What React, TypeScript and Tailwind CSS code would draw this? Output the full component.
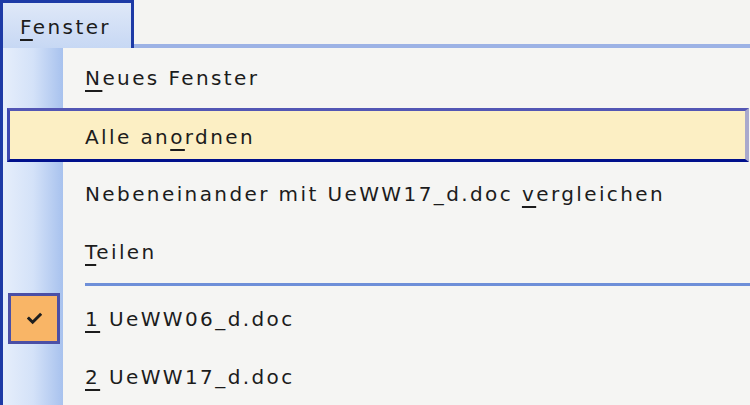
import type { ReactNode } from 'react'

type Item = {
  label: ReactNode
  selected?: boolean
  checked?: boolean
}

const U = ({ children }: { children: ReactNode }) => (
  <span className="underline decoration-[2px] underline-offset-[5px]">{children}</span>
)

const items: (Item | 'sep')[] = [
  { label: <><U>N</U>eues Fenster</> },
  { label: <>Alle an<U>o</U>rdnen</>, selected: true },
  { label: <>Nebeneinander mit UeWW17_d.doc <U>v</U>ergleichen</> },
  { label: <><U>T</U>eilen</> },
  'sep',
  { label: <><U>1</U> UeWW06_d.doc</>, checked: true },
  { label: <><U>2</U> UeWW17_d.doc</> },
]

function CheckBox() {
  return (
    <div className="w-[52px] h-[51px] border-[3px] border-[#4b4fa6] bg-[#f9b566] flex items-center justify-center">
      <svg width="15" height="13" viewBox="0 0 16 14">
        <path d="M2 7 L6 11 L14 3" fill="none" stroke="#1e1e1e" strokeWidth="3.2" strokeLinecap="square" />
      </svg>
    </div>
  )
}

export default function App() {
  return (
    <div
      className="w-[750px] h-[405px] overflow-hidden bg-[#f4f4f2] text-[#1c1c1c] text-[20px] tracking-[2.4px]"
      style={{ fontFamily: '"DejaVu Sans", Verdana, sans-serif' }}
    >
      {/* menu bar */}
      <div className="flex h-[48px]">
        <div className="w-[134px] h-[48px] border-l-[3px] border-t-[3px] border-r-[3px] border-[#1d3aa6] bg-[linear-gradient(to_bottom,#dfe8f8,#c7d8f4)] flex items-center pl-[17px] pt-[2px]">
          <span><U>F</U>enster</span>
        </div>
        <div className="flex-1 h-[48px] border-b-[4px] border-[#9cb2e5]" />
      </div>

      {/* dropdown */}
      <div className="h-[357px] border-l-[3px] border-[#1d3aa6] bg-[linear-gradient(to_right,#e6eefb_0px,#d4e2f8_30px,#a8c2ee_60px,#f5f5f3_60px)]">
        {items.map((it, i) => {
          if (it === 'sep') {
            return (
              <div key={i} className="h-[9px] flex items-center pl-[82px]">
                <div className="h-[3px] w-full bg-[#6e8fd8]" />
              </div>
            )
          }
          if (it.selected) {
            return (
              <div key={i} className="h-[58px] py-[2px] pl-[4px] pr-[1px]">
                <div className="h-full border-t-[3px] border-l-[3px] border-b-[3px] border-r-[4px] border-t-[#5356b4] border-l-[#3c46b0] border-b-[#00108c] border-r-[#a9a9cc] bg-[#fcefc4] flex items-center pl-[75px] pt-[3px]">
                  {it.label}
                </div>
              </div>
            )
          }
          return (
            <div key={i} className="h-[58px] flex items-center">
              <div className="w-[60px] pl-[5px]">{it.checked && <CheckBox />}</div>
              <div className="pl-[22px] pt-[2px]">{it.label}</div>
            </div>
          )
        })}
      </div>
    </div>
  )
}
